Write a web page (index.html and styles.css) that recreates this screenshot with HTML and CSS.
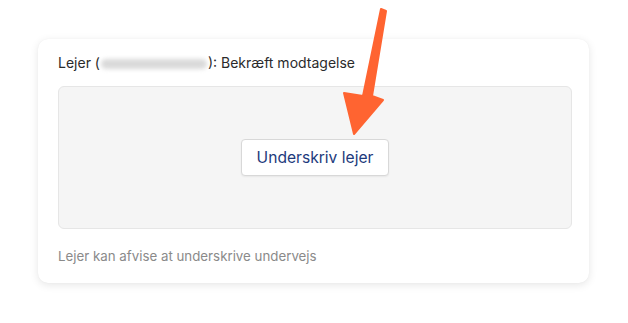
FILE: index.html
```html
<!DOCTYPE html>
<html lang="da">
<head>
<meta charset="utf-8">
<link rel="stylesheet" href="styles.css">
</head>
<body>
<div class="card">
  <div class="title">Lejer (<span class="blur"></span>): Bekræft modtagelse</div>
  <div class="panel">
    <button class="sign">Underskriv lejer</button>
  </div>
  <div class="note">Lejer kan afvise at underskrive undervejs</div>
</div>
<svg class="arrow" width="628" height="323" viewBox="0 0 628 323">
  <polygon points="381,9 386,11 372,96 383,100 354,134 344,93 363,96" fill="#ff6431" stroke="#ff6431" stroke-width="2" stroke-linejoin="round"/>
</svg>
</body>
</html>
```
FILE: styles.css
```css
html, body {
  margin: 0;
  padding: 0;
  background: #ffffff;
}
body {
  width: 628px;
  height: 323px;
  position: relative;
  overflow: hidden;
  font-family: Inter, "Noto Sans", sans-serif;
}
.card {
  margin: 39px 0 0 38px;
  width: 551px;
  height: 244px;
  box-sizing: border-box;
  padding: 14px 17px 0 20px;
  background: #fff;
  border-radius: 10px;
  box-shadow: 0 2px 8px rgba(0,0,0,0.10), 0 0 1px rgba(0,0,0,0.06);
  display: flex;
  flex-direction: column;
}
.title {
  font-size: 14px;
  line-height: 20px;
  color: #2b2b2b;
  height: 20px;
}
.blur {
  display: inline-block;
  width: 106px;
  height: 10px;
  vertical-align: -1px;
  margin: 0 1px;
  background: #dadada;
  border-radius: 5px;
  filter: blur(2.2px);
}
.panel {
  margin-top: 13px;
  height: 143px;
  box-sizing: border-box;
  background: #f5f5f5;
  border: 1px solid #e6e6e6;
  border-radius: 6px;
  display: flex;
  align-items: center;
  justify-content: center;
}
.sign {
  width: 148px;
  height: 37px;
  background: #fff;
  border: 1px solid #d8d8d8;
  border-radius: 4px;
  box-shadow: 0 1px 2px rgba(0,0,0,0.06);
  font-family: Inter, "Noto Sans", sans-serif;
  font-size: 15.6px;
  font-weight: 400;
  color: #1d3a7c;
  padding: 0;
}
.note {
  margin-top: 18px;
  font-size: 13.3px;
  line-height: 18px;
  color: #8a8a8a;
}
.arrow {
  position: absolute;
  left: 0;
  top: 0;
}
```
